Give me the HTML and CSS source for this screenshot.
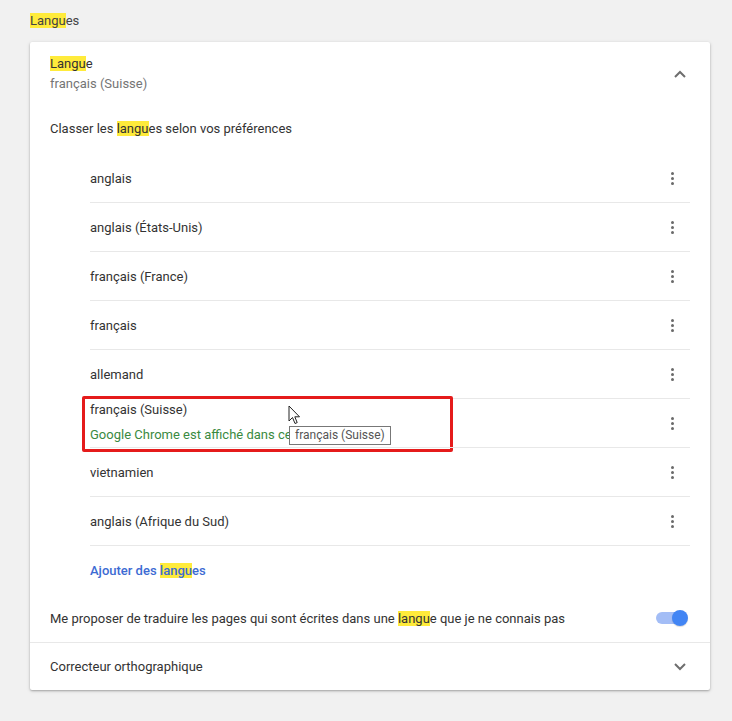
FILE: index.html
```html
<!DOCTYPE html>
<html lang="fr">
<head>
<meta charset="utf-8">
<title>Langues</title>
<link rel="stylesheet" href="styles.css">
</head>
<body>
<div class="page">
  <h2 class="section-title"><mark>Langu</mark>es</h2>
  <div class="card">
    <div class="card-head">
      <div class="head-text">
        <div class="head-title"><mark>Langu</mark>e</div>
        <div class="head-sub">français (Suisse)</div>
      </div>
      <svg class="chev" width="12" height="8" viewBox="0 0 12 8"><path d="M1 7 L6 2 L11 7" fill="none" stroke="#6e6e6e" stroke-width="2"/></svg>
    </div>
    <div class="order-label">Classer les <mark>langu</mark>es selon vos préférences</div>
    <div class="lang-list">
      <div class="lang-row"><span>anglais</span><span class="kebab"><i></i><i></i><i></i></span></div>
      <div class="lang-row"><span>anglais (États-Unis)</span><span class="kebab"><i></i><i></i><i></i></span></div>
      <div class="lang-row"><span>français (France)</span><span class="kebab"><i></i><i></i><i></i></span></div>
      <div class="lang-row"><span>français</span><span class="kebab"><i></i><i></i><i></i></span></div>
      <div class="lang-row"><span>allemand</span><span class="kebab"><i></i><i></i><i></i></span></div>
      <div class="lang-row current">
        <div class="two-line">
          <span>français (Suisse)</span>
          <span class="green">Google Chrome est affiché dans cette langue</span>
        </div>
        <span class="kebab"><i></i><i></i><i></i></span>
        <div class="red-box"></div>
        <div class="tooltip">français (Suisse)</div>
        <svg class="cursor" width="13" height="20" viewBox="0 0 13 20"><path d="M1 1 L1 16 L4.5 12.5 L7 18.5 L9.2 17.6 L6.8 11.8 L11.5 11.8 Z" fill="#fff" stroke="#222" stroke-width="1"/></svg>
      </div>
      <div class="lang-row"><span>vietnamien</span><span class="kebab"><i></i><i></i><i></i></span></div>
      <div class="lang-row"><span>anglais (Afrique du Sud)</span><span class="kebab"><i></i><i></i><i></i></span></div>
      <div class="lang-row add"><span>Ajouter des <mark>langu</mark>es</span></div>
    </div>
    <div class="toggle-row">
      <span>Me proposer de traduire les pages qui sont écrites dans une <mark>langu</mark>e que je ne connais pas</span>
      <span class="toggle"><span class="knob"></span></span>
    </div>
    <div class="spell-row">
      <span>Correcteur orthographique</span>
      <svg class="chev" width="12" height="8" viewBox="0 0 12 8"><path d="M1 1 L6 6 L11 1" fill="none" stroke="#6e6e6e" stroke-width="2"/></svg>
    </div>
  </div>
</div>
</body>
</html>
```
FILE: styles.css
```css
html, body {
  margin: 0;
  padding: 0;
}
body {
  background: #f1f1f1;
  font-family: Roboto, "Liberation Sans", Arial, sans-serif;
  font-size: 13px;
  color: #333;
  width: 732px;
  height: 721px;
  overflow: hidden;
}
mark {
  background: #ffeb3b;
  color: inherit;
}
.page {
  padding: 0 22px 0 30px;
}
.section-title {
  margin: 0;
  font-size: 13px;
  font-weight: 400;
  color: #444;
  line-height: 20px;
  padding: 11px 0 11px;
}
.card {
  background: #fff;
  border-radius: 2px;
  box-shadow: 0 1px 2px rgba(0,0,0,0.25), 0 1px 4px rgba(0,0,0,0.12);
  width: 680px;
  height: 648px;
}
.card-head {
  display: flex;
  align-items: center;
  justify-content: space-between;
  padding: 12px 24px 12px 20px;
}
.head-title, .head-sub {
  line-height: 20px;
}
.head-sub {
  color: #757575;
}
.chev {
  display: block;
}
.order-label {
  padding: 13px 20px 0;
  line-height: 20px;
}
.lang-list {
  margin: 15px 20px 0 60px;
}
.lang-row {
  position: relative;
  display: flex;
  align-items: center;
  justify-content: space-between;
  height: 48px;
  border-top: 1px solid #e8e8e8;
}
.lang-row:first-child {
  border-top: none;
}
.kebab {
  width: 36px;
  display: flex;
  flex-direction: column;
  align-items: center;
  gap: 2px;
}
.kebab i {
  width: 3px;
  height: 3px;
  border-radius: 50%;
  background: #6a6a6a;
}
.two-line {
  display: flex;
  flex-direction: column;
  gap: 5px;
  line-height: 20px;
  padding-bottom: 1px;
}
.green {
  color: #3a8a3f;
  white-space: nowrap;
}
.red-box {
  position: absolute;
  left: -8px;
  top: -3px;
  width: 365px;
  height: 50px;
  border: 3px solid #e51b1b;
  border-radius: 2px;
  pointer-events: none;
}
.tooltip {
  position: absolute;
  left: 199px;
  top: 27px;
  height: 17px;
  line-height: 16px;
  padding: 0 5px;
  background: #fff;
  border: 1px solid #777;
  font-size: 12px;
  color: #555;
  white-space: nowrap;
}
.cursor {
  position: absolute;
  left: 198px;
  top: 6px;
}
.lang-row.add {
  color: #3d6bd3;
  font-weight: 500;
}
.toggle-row {
  display: flex;
  align-items: center;
  justify-content: space-between;
  height: 48px;
  padding: 0 20px;
}
.toggle {
  position: relative;
  width: 26px;
  height: 12px;
  margin-right: 8px;
  border-radius: 6px;
  background: #a3bdf6;
}
.knob {
  position: absolute;
  right: -6px;
  top: -2px;
  width: 16px;
  height: 16px;
  border-radius: 50%;
  background: #4285f4;
  box-shadow: 0 1px 1px rgba(0,0,0,0.15);
}
.spell-row {
  display: flex;
  align-items: center;
  justify-content: space-between;
  height: 47px;
  padding: 0 24px 0 20px;
  border-top: 1px solid #e8e8e8;
}
```
